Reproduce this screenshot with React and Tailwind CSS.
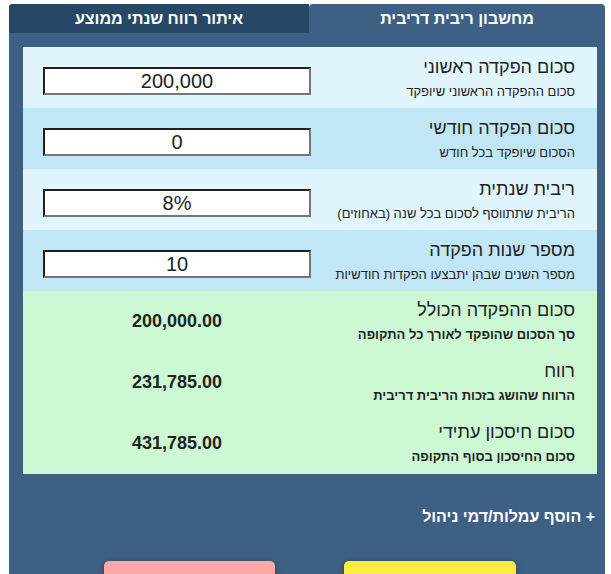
import React from 'react';

const inputs = [
  { title: 'סכום הפקדה ראשוני', sub: 'סכום ההפקדה הראשוני שיופקד', value: '200,000', bg: 'bg-[#e1f5fe]' },
  { title: 'סכום הפקדה חודשי', sub: 'הסכום שיופקד בכל חודש', value: '0', bg: 'bg-[#c1e7f6]' },
  { title: 'ריבית שנתית', sub: 'הריבית שתתווסף לסכום בכל שנה (באחוזים)', value: '8%', bg: 'bg-[#e1f5fe]' },
  { title: 'מספר שנות הפקדה', sub: 'מספר השנים שבהן יתבצעו הפקדות חודשיות', value: '10', bg: 'bg-[#c1e7f6]' },
];

const results = [
  { title: 'סכום ההפקדה הכולל', sub: 'סך הסכום שהופקד לאורך כל התקופה', value: '200,000.00' },
  { title: 'רווח', sub: 'הרווח שהושג בזכות הריבית דריבית', value: '231,785.00' },
  { title: 'סכום חיסכון עתידי', sub: 'סכום החיסכון בסוף התקופה', value: '431,785.00' },
];

export default function App() {
  return (
    <div dir="rtl" className="min-h-screen bg-white pt-[4px] font-['Liberation_Sans',Arial,sans-serif] text-[#222]">
      <div className="ml-[9px] mr-[6px]">
        {/* Tabs */}
        <div className="flex">
          <div className="w-[296px] h-[29px] rounded-tr-[4px] rounded-tl-[4px] bg-[#3e6084] text-white font-bold text-[16px] flex items-center justify-center">
            מחשבון ריבית דריבית
          </div>
          <div className="flex-1 h-[29px] rounded-tl-[3px] bg-[#264766] text-white font-bold text-[16px] flex items-center justify-center">
            איתור רווח שנתי ממוצע
          </div>
        </div>

        {/* Panel */}
        <div className="bg-[#3e6084] pt-[14px] pl-[14px] pr-[8px] pb-[60px]">
          {inputs.map((row) => (
            <div key={row.title} className={`flex h-[61px] ${row.bg}`}>
              <div className="w-[286px] pr-[22px] pt-[8px]">
                <div className="text-[18px] leading-[24px]">{row.title}</div>
                <div className="text-[13px] leading-[18px] mt-[4px]">{row.sub}</div>
              </div>
              <div className="flex-1 pl-[20px] pt-[20px]">
                <input
                  readOnly
                  value={row.value}
                  className="w-full h-[28px] bg-white text-center text-[20px] text-[#222] border-2 border-t-[#1f1f1f] border-r-[#767676] border-b-[#767676] border-l-[#1f1f1f] outline-none font-['Liberation_Sans',Arial,sans-serif]"
                />
              </div>
            </div>
          ))}

          <div className="bg-[#ccf9d3]">
            {results.map((row) => (
              <div key={row.title} className="flex h-[61px] pt-[7px]">
                <div className="w-[286px] pr-[22px]">
                  <div className="text-[18px] leading-[24px]">{row.title}</div>
                  <div className="text-[13px] leading-[18px] mt-[4px] font-bold">{row.sub}</div>
                </div>
                <div className="flex-1 pl-[20px] pt-[10px] text-center text-[18px] font-bold">
                  {row.value}
                </div>
              </div>
            ))}
          </div>

          <div className="mt-[33px] pr-[2px] text-white font-bold text-[16px] leading-[20px]">
            + הוסף עמלות/דמי ניהול
          </div>

          <div className="mt-[34px] flex justify-center gap-[69px]">
            <button className="w-[172px] h-[40px] rounded-[5px] bg-[#ffeb3b] shadow-[0_2px_6px_rgba(0,0,0,0.35)]"></button>
            <button className="w-[171px] h-[40px] rounded-[5px] bg-[#ffa8a8] shadow-[0_2px_6px_rgba(0,0,0,0.35)]"></button>
          </div>
        </div>
      </div>
    </div>
  );
}
